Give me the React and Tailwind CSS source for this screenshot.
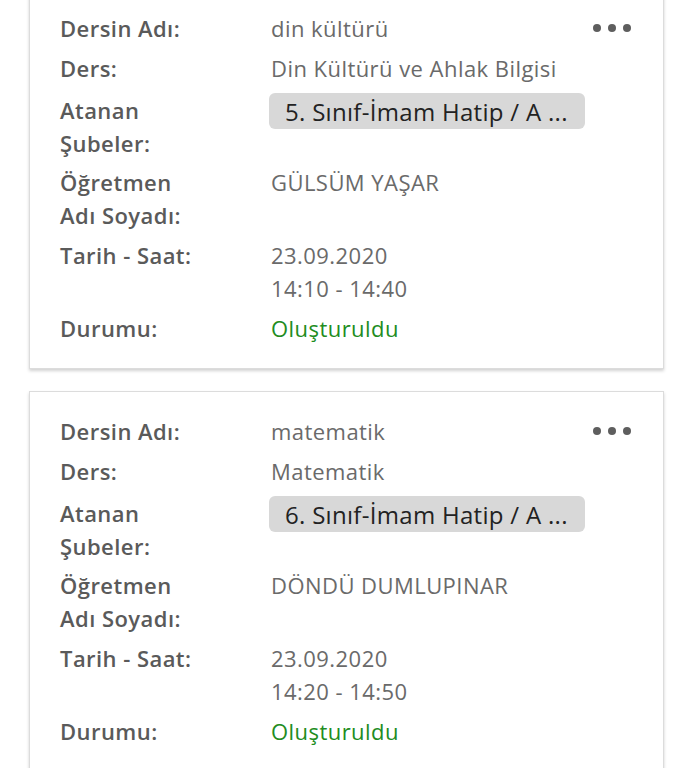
import React from "react";

const cards = [
  {
    name: "din kültürü",
    ders: "Din Kültürü ve Ahlak Bilgisi",
    sube: "5. Sınıf-İmam Hatip / A ...",
    ogretmen: "GÜLSÜM YAŞAR",
    tarih: "23.09.2020",
    saat: "14:10 - 14:40",
  },
  {
    name: "matematik",
    ders: "Matematik",
    sube: "6. Sınıf-İmam Hatip / A ...",
    ogretmen: "DÖNDÜ DUMLUPINAR",
    tarih: "23.09.2020",
    saat: "14:20 - 14:50",
  },
];

function Row({ label, children, className = "" }) {
  return (
    <div className={`flex ${className}`}>
      <div className="w-[211px] shrink-0 font-semibold text-[#5a5a5a]">{label}</div>
      <div className="flex-1 text-[#6a6a6a]">{children}</div>
    </div>
  );
}

function Card({ c, first }) {
  return (
    <div
      className={`relative mx-[29px] border border-[#dcdcdc] bg-white shadow-[0_2px_3px_rgba(0,0,0,0.18)] pl-[30px] pr-[30px] pt-[23px] pb-[23px] ${first ? "mt-[-12px]" : ""}`}
    >
      <div className="absolute right-[32px] top-[23px] flex gap-[7px] pt-[12px]">
        <span className="w-[8px] h-[8px] rounded-full bg-[#5e5e5e]" />
        <span className="w-[8px] h-[8px] rounded-full bg-[#5e5e5e]" />
        <span className="w-[8px] h-[8px] rounded-full bg-[#5e5e5e]" />
      </div>
      <div className="flex flex-col gap-[7px] text-[22px] leading-[33px] tracking-[0.45px]">
        <Row label="Dersin Adı:">{c.name}</Row>
        <Row label="Ders:">{c.ders}</Row>
        <Row className="mt-[2px]" label={<>Atanan<br />Şubeler:</>}>
          <span className="inline-flex items-center h-[36px] w-[316px] -ml-[2px] mt-[-1px] px-[16px] rounded-[6px] bg-[#d8d8d8] text-[#222] text-[24px] tracking-[0.3px]">
            {c.sube}
          </span>
        </Row>
        <Row className="-mt-[1px]" label={<>Öğretmen<br />Adı Soyadı:</>}>{c.ogretmen}</Row>
        <Row label="Tarih - Saat:">
          {c.tarih}
          <br />
          {c.saat}
        </Row>
        <Row label="Durumu:">
          <span className="text-[#218c21]">Oluşturuldu</span>
        </Row>
      </div>
    </div>
  );
}

export default function App() {
  return (
    <div className="w-[693px] h-[768px] overflow-hidden bg-white" style={{ fontFamily: '"Open Sans", sans-serif' }}>
      <div className="flex flex-col gap-[22px]">
        {cards.map((c, i) => (
          <Card key={i} c={c} first={i === 0} />
        ))}
      </div>
    </div>
  );
}
